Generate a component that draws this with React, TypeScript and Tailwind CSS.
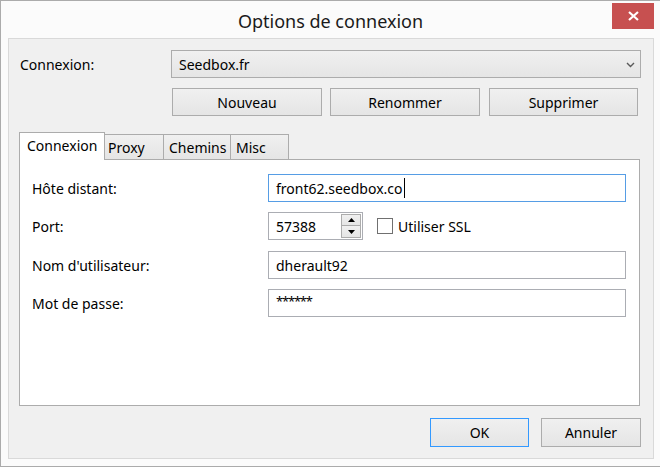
import React from "react";

const font = "font-['Noto_Sans','Open_Sans',sans-serif]";
const btn =
  "flex items-center justify-center border border-[#acacac] bg-gradient-to-b from-[#f0f0f0] to-[#e5e5e5] text-[14px] text-black";

function Field({ label, children }: { label: string; children: React.ReactNode }) {
  return (
    <div className="flex items-center h-[28px]">
      <div className="w-[236px] text-[14px] text-black">{label}</div>
      {children}
    </div>
  );
}

function Input({ value, focused }: { value: string; focused?: boolean }) {
  return (
    <div
      className={`relative flex items-center h-[28px] w-[358px] bg-white border px-[7px] text-[14px] text-black ${
        focused ? "border-[#569de5]" : "border-[#abadb3]"
      }`}
    >
      <span>{value}</span>
      {focused && <span className="w-px h-[20px] bg-black ml-px" />}
    </div>
  );
}

export default function App() {
  return (
    <div className={`w-[660px] h-[467px] bg-[#fbfbfb] border-l border-t border-b border-[#ababab] ${font}`}>
      {/* title bar */}
      <div className="relative h-[37px] flex items-center justify-center">
        <span className="text-[18px] text-[#1a1a1a] mt-[3px]">Options de connexion</span>
        <div className="absolute left-[611px] top-[2px] w-[42px] h-[26px] bg-[#c75050] flex items-center justify-center">
          <svg width="11" height="10" viewBox="0 0 11 10">
            <path d="M1 1 L10 9 M10 1 L1 9" stroke="white" strokeWidth="2.2" />
          </svg>
        </div>
      </div>

      {/* client area */}
      <div className="ml-[7px] w-[646px] h-[421px] bg-[#f0f0f0] border border-[#d9d9d9] pl-[10px] pr-[12px] pt-[11px]">
        <div className="flex items-center">
          <div className="w-[152px] pl-px text-[14px] text-black">Connexion:</div>
          <div className="relative flex items-center h-[28px] w-[470px] border border-[#acacac] bg-gradient-to-b from-[#f0f0f0] to-[#e5e5e5] pl-[7px] text-[14px] text-black">
            Seedbox.fr
            <svg className="absolute right-[5px] top-[11px]" width="9" height="6" viewBox="0 0 9 6">
              <path d="M1 1 L4.5 4.5 L8 1" fill="none" stroke="#5a5a5a" strokeWidth="1.4" />
            </svg>
          </div>
        </div>

        <div className="flex mt-[10px] ml-[153px] h-[28px]">
          <div className={`${btn} w-[150px]`}>Nouveau</div>
          <div className={`${btn} w-[150px] ml-[8px]`}>Renommer</div>
          <div className={`${btn} w-[149px] ml-[9px]`}>Supprimer</div>
        </div>

        {/* tabs */}
        <div className="flex items-end h-[27px] mt-[16px] text-[14px] text-black">
          <div className="relative z-10 -mb-px h-[28px] w-[86px] bg-white border border-b-0 border-[#acacac] pl-[7px] flex items-center pb-[3px]">
            Connexion
          </div>
          <div className="h-[25px] w-[59px] border-t border-r border-[#acacac] bg-gradient-to-b from-[#f0f0f0] to-[#e5e5e5] pl-[3px] flex items-center">
            Proxy
          </div>
          <div className="h-[25px] w-[67px] border-t border-r border-[#acacac] bg-gradient-to-b from-[#f0f0f0] to-[#e5e5e5] pl-[5px] flex items-center">
            Chemins
          </div>
          <div className="h-[25px] w-[58px] border-t border-r border-[#acacac] bg-gradient-to-b from-[#f0f0f0] to-[#e5e5e5] pl-[5px] flex items-center">
            Misc
          </div>
        </div>
        <div className="w-[621px] h-[247px] bg-white border border-[#acacac] pl-[12px] pt-[14px]">
          <Field label="Hôte distant:">
            <Input value="front62.seedbox.co" focused />
          </Field>
          <div className="mt-[10px]">
            <Field label="Port:">
              <div className="relative flex items-center h-[28px] w-[95px] bg-white border border-[#abadb3] pl-[7px] text-[14px]">
                57388
                <div className="absolute right-[1px] top-[1px] w-[20px] flex flex-col">
                  <div className="h-[12px] border border-[#acacac] bg-gradient-to-b from-[#f0f0f0] to-[#e5e5e5] flex items-center justify-center">
                    <svg width="7" height="4" viewBox="0 0 7 4"><path d="M0 4 L3.5 0 L7 4 Z" fill="#000" /></svg>
                  </div>
                  <div className="h-[12px] border border-t-0 border-[#acacac] bg-gradient-to-b from-[#f0f0f0] to-[#e5e5e5] flex items-center justify-center">
                    <svg width="7" height="4" viewBox="0 0 7 4"><path d="M0 0 L3.5 4 L7 0 Z" fill="#000" /></svg>
                  </div>
                </div>
              </div>
              <div className="ml-[14px] w-[16px] h-[16px] border border-[#707070] bg-white" />
              <span className="ml-[5px] text-[14px]">Utiliser SSL</span>
            </Field>
          </div>
          <div className="mt-[11px]">
            <Field label="Nom d'utilisateur:">
              <Input value="dherault92" />
            </Field>
          </div>
          <div className="mt-[10px]">
            <Field label="Mot de passe:">
              <div className="flex items-start h-[28px] w-[358px] bg-white border border-[#abadb3] px-[7px] pt-[2px] text-[13px] tracking-[-1.2px]">
                ******
              </div>
            </Field>
          </div>
        </div>

        <div className="flex justify-end mt-[12px]">
          <div className={`${btn} w-[99px] h-[29px] !border-[#3399ff]`}>OK</div>
          <div className={`${btn} w-[100px] h-[29px] ml-[12px]`}>Annuler</div>
        </div>
      </div>
    </div>
  );
}
